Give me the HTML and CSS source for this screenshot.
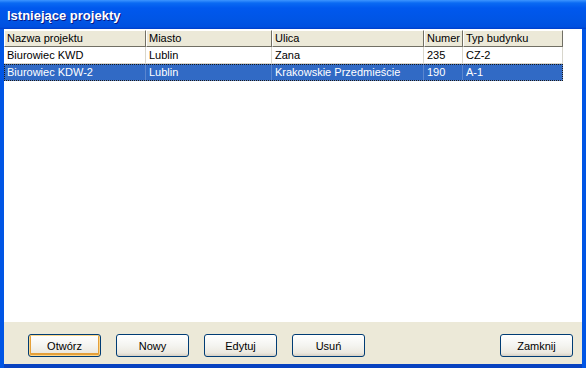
FILE: index.html
```html
<!DOCTYPE html>
<html lang="pl">
<head>
  <meta charset="UTF-8">
  <meta name="viewport" content="width=device-width, initial-scale=1.0">
  <title>Istniejące projekty</title>
  <link rel="stylesheet" href="styles.css">
</head>
<body>
  <div class="window">
    <div class="titlebar">Istniejące projekty</div>
    <div class="client">
      <div class="list">
        <div class="row head">
          <div class="cell">Nazwa projektu</div>
          <div class="cell">Miasto</div>
          <div class="cell">Ulica</div>
          <div class="cell">Numer</div>
          <div class="cell">Typ budynku</div>
        </div>
        <div class="row">
          <div class="cell">Biurowiec KWD</div>
          <div class="cell">Lublin</div>
          <div class="cell">Zana</div>
          <div class="cell">235</div>
          <div class="cell">CZ-2</div>
        </div>
        <div class="row selected">
          <div class="cell">Biurowiec KDW-2</div>
          <div class="cell">Lublin</div>
          <div class="cell">Krakowskie Przedmieście</div>
          <div class="cell">190</div>
          <div class="cell">A-1</div>
        </div>
      </div>
      <div class="actions">
        <button class="btn default">Otwórz</button>
        <button class="btn">Nowy</button>
        <button class="btn">Edytuj</button>
        <button class="btn">Usuń</button>
        <button class="btn close">Zamknij</button>
      </div>
    </div>
  </div>
</body>
</html>
```

FILE: styles.css
```css
/* Window frame */
body {
  margin: 0;
  font-family: 'Liberation Sans', Arial, sans-serif;
  font-size: 11px;
  color: #000;
}

.window {
  width: 586px;
  height: 368px;
  display: flex;
  flex-direction: column;
  background: #0055e5;
}

.titlebar {
  height: 29px;
  line-height: 31px;
  padding-left: 7px;
  font-size: 13px;
  font-weight: bold;
  color: #fff;
  text-shadow: 1px 1px #0a1883;
  background: linear-gradient(to bottom, #3d95ff 0, #0a6af3 3px, #0058ee 8px, #0055e5 20px, #0050e0 27px, #003dc8 29px);
}

.client {
  flex: 1;
  display: flex;
  flex-direction: column;
  margin: 0 4px;
  border-bottom: 4px solid #0842c0;
  background: #ece9d8;
}

/* List view */
.list {
  height: 292px;
  padding-top: 1px;
  background: #fff;
}

.row {
  display: grid;
  grid-template-columns: 142px 126px 152px 39px 100px;
  width: 559px;
  height: 17px;
}

.cell {
  padding-left: 3px;
  line-height: 16px;
  white-space: nowrap;
  overflow: hidden;
  border-right: 1px solid #d8d6cc;
  border-bottom: 1px solid #d8d6cc;
}

.head .cell {
  background: #ece9d8;
  border-top: 1px solid #fff;
  border-left: 1px solid #fff;
  border-right: 1px solid #716f64;
  border-bottom: 1px solid #716f64;
  line-height: 14px;
  padding-left: 2px;
}

.selected {
  background: #316ac5;
  color: #fff;
  outline: 1px dotted #1a1a1a;
  outline-offset: -1px;
}

.selected .cell {
  border-color: #5a86cf;
}

/* Buttons */
.actions {
  flex: 1;
  display: flex;
  gap: 15px;
  padding: 12px 9px 0 24px;
}

.btn {
  width: 73px;
  height: 23px;
  font-family: 'Liberation Sans', Arial, sans-serif;
  font-size: 11px;
  color: #000;
  border: 1px solid #003c74;
  border-radius: 3px;
  background: linear-gradient(to bottom, #fff 0, #f4f4f0 50%, #ece9e0 85%, #d6d0c5 100%);
  padding: 0;
}

.btn.default {
  box-shadow: inset 0 0 0 1px #fbd68b, inset 0 -1px 0 2px #e5a03a;
}

.btn.close {
  margin-left: auto;
}
```
